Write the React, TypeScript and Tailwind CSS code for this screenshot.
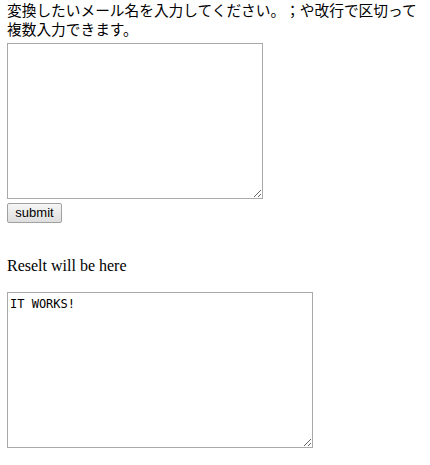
import { useState } from "react";

const App = () => {
  const [input, setInput] = useState("");
  const [result] = useState("IT WORKS!");

  return (
    <div className="w-[430px] h-[465px] bg-white px-[7px] text-black">
      <div className="text-[14.7px] leading-[19px] [text-spacing-trim:space-all] font-['Noto_Sans_CJK_JP',sans-serif]">
        変換したいメール名を入力してください。；や改行で区切って
        <br />
        複数入力できます。
      </div>
      <textarea
        value={input}
        onChange={(e) => setInput(e.target.value)}
        className="block mt-[5px] w-[256px] h-[156px] border border-[#a9a9a9] p-[2px] text-[12px] font-['DejaVu_Sans_Mono',monospace] outline-none"
      />
      <button className="block mt-[4px] w-[55px] h-[20px] border border-[#a0a0a0] rounded-[2px] bg-gradient-to-b from-[#f6f6f6] to-[#dedede] text-[13px] leading-[18px] font-['Liberation_Sans',sans-serif]">
        submit
      </button>
      <div className="mt-[34px] text-[16px] leading-[18px] font-['Liberation_Serif',serif]">
        Reselt will be here
      </div>
      <textarea
        readOnly
        value={result}
        className="block mt-[17px] w-[306px] h-[156px] border border-[#a9a9a9] px-[2px] py-[4px] text-[12px] leading-[14px] font-['DejaVu_Sans_Mono',monospace] outline-none"
      />
    </div>
  );
};

export default App;
